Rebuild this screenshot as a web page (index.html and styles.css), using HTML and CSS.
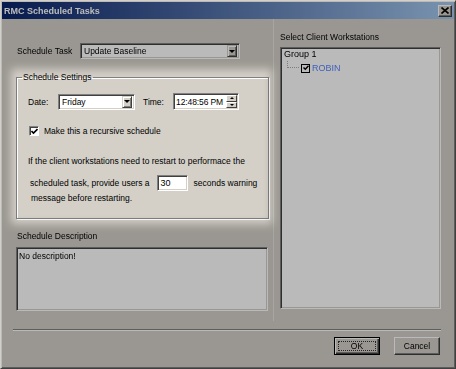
FILE: index.html
```html
<!DOCTYPE html>
<html>
<head>
<meta charset="utf-8">
<link rel="stylesheet" href="styles.css">
</head>
<body>
<div class="window">
  <div class="titlebar soft">
    <span class="title">RMC Scheduled Tasks</span>
    <span class="close"><svg width="8" height="7" viewBox="0 0 8 7"><path d="M0.5 0.5 L7.5 6.5 M7.5 0.5 L0.5 6.5" stroke="#000" stroke-width="1.6"/></svg></span>
  </div>
  <div class="main">
    <div class="left">
      <div class="task-row soft">
        <span class="task-label">Schedule Task</span>
        <div class="combo combo-task"><span class="combo-text">Update Baseline</span><span class="dd"><i class="tri"></i></span></div>
      </div>
      <fieldset class="group">
        <legend>Schedule Settings</legend>
        <div class="dt-row">
          <span class="lbl-date">Date:</span>
          <div class="combo combo-date"><span class="combo-text">Friday</span><span class="dd"><i class="tri"></i></span></div>
          <span class="lbl-time">Time:</span>
          <div class="spin">
            <span class="spin-text">12:48:56 PM</span>
            <span class="spin-btns"><span class="sb"><i class="up"></i></span><span class="sb"><i class="down"></i></span></span>
          </div>
        </div>
        <div class="check-row">
          <span class="cb"><svg width="7" height="7" viewBox="0 0 7 7"><path d="M0.5 3 L2.5 5 L6.5 1" stroke="#000" stroke-width="1.6" fill="none"/></svg></span>
          <span>Make this a recursive schedule</span>
        </div>
        <div class="msg1">If the client workstations need to restart to performace the</div>
        <div class="msg2">
          <span>scheduled task, provide users a</span>
          <span class="num">30</span>
          <span>seconds warning</span>
        </div>
        <div class="msg3">message before restarting.</div>
      </fieldset>
      <div class="desc-label soft">Schedule Description</div>
      <div class="desc soft">No description!</div>
    </div>
    <div class="right soft">
      <div class="right-label">Select Client Workstations</div>
      <div class="tree">
        <div class="node">Group 1</div>
        <div class="node child">
          <span class="branch"></span>
          <span class="tcb"><svg width="6" height="6" viewBox="0 0 6 6"><path d="M0.5 2.5 L2.3 4.3 L5.5 0.8" stroke="#000" stroke-width="1.4" fill="none"/></svg></span>
          <span class="robin">ROBIN</span>
        </div>
      </div>
    </div>
  </div>
  <div class="sep soft"></div>
  <div class="buttons soft">
    <span class="btn default"><span class="focus">OK</span></span>
    <span class="btn">Cancel</span>
  </div>
  <div class="spotlight"></div>
</div>
</body>
</html>
```

FILE: styles.css
```css
* { box-sizing: border-box; }
html, body { margin: 0; padding: 0; }
body {
  width: 456px;
  height: 369px;
  overflow: hidden;
  background: #d4d0c8;
  font-family: "Liberation Sans", Arial, sans-serif;
  font-size: 8.5px;
  color: #000;
}
.soft { filter: blur(0.45px); }

.window {
  position: relative;
  width: 456px;
  height: 369px;
  overflow: hidden;
  background: #d4d0c8;
  border: 1px solid;
  border-color: #d4d0c8 #404040 #404040 #d4d0c8;
  box-shadow: inset 1px 1px 0 #fff, inset -1px -1px 0 #808080;
  display: flex;
  flex-direction: column;
}

.titlebar {
  margin: 1px 1px 0 1px;
  height: 17px;
  background: linear-gradient(to right, #0a246a, #a6caf0);
  display: flex;
  align-items: center;
  justify-content: space-between;
  padding: 0 2px 0 2px;
}
.title {
  color: #fff;
  font-weight: bold;
  font-size: 9px;
}
.close {
  width: 14px;
  height: 12px;
  background: #d4d0c8;
  border: 1px solid;
  border-color: #fff #404040 #404040 #fff;
  box-shadow: inset -1px -1px 0 #808080;
  display: flex;
  align-items: center;
  justify-content: center;
}

.main {
  height: 302px;
  display: flex;
  flex: none;
}
.left {
  width: 254px;
  margin-left: 14px;
  padding-top: 24px;
  display: flex;
  flex-direction: column;
}

.task-row {
  display: flex;
  align-items: center;
  height: 16px;
}
.task-label {
  width: 65px;
  padding-left: 2px;
}

.combo {
  height: 16px;
  background: #fff;
  border: 1px solid;
  border-color: #808080 #fff #fff #808080;
  box-shadow: inset 1px 1px 0 #404040, inset -1px -1px 0 #d4d0c8;
  display: flex;
  align-items: center;
  padding: 2px;
}
.combo-task { width: 160px; }
.combo-date { width: 77px; }
.combo-text { flex: 1; padding-left: 1px; white-space: nowrap; }
.dd {
  width: 10px;
  height: 12px;
  background: #d4d0c8;
  border: 1px solid;
  border-color: #d4d0c8 #404040 #404040 #d4d0c8;
  box-shadow: inset 1px 1px 0 #fff, inset -1px -1px 0 #808080;
  display: flex;
  align-items: center;
  justify-content: center;
}
.tri {
  width: 0;
  height: 0;
  border-left: 3px solid transparent;
  border-right: 3px solid transparent;
  border-top: 3px solid #000;
}

.group {
  margin: 13px 0 0 1px;
  width: 253px;
  padding: 0 6px 14px 5px;
  border: 1px solid #808080;
  box-shadow: 1px 1px 0 #fff, inset 1px 1px 0 #fff;
  min-width: 0;
}
.group legend {
  padding: 0 1px;
  line-height: 11px;
}
.dt-row {
  margin: 10px 0 0 6px;
  display: flex;
  align-items: center;
  height: 17px;
}
.lbl-date { width: 30px; }
.lbl-time { width: 30px; margin-left: 8px; }
.spin {
  width: 66px;
  height: 17px;
  background: #fff;
  border: 1px solid;
  border-color: #808080 #fff #fff #808080;
  box-shadow: inset 1px 1px 0 #404040, inset -1px -1px 0 #d4d0c8;
  display: flex;
  align-items: center;
  padding: 2px 1px 2px 2px;
}
.spin-text {
  flex: 1;
  font-size: 8.5px;
  white-space: nowrap;
  overflow: hidden;
  letter-spacing: -0.1px;
}
.spin-btns {
  display: flex;
  flex-direction: column;
  width: 11px;
  height: 13px;
  flex: none;
}
.sb {
  flex: 1;
  background: #d4d0c8;
  border: 1px solid;
  border-color: #fff #404040 #404040 #fff;
  display: flex;
  align-items: center;
  justify-content: center;
}
.up, .down {
  width: 0; height: 0;
  border-left: 2px solid transparent;
  border-right: 2px solid transparent;
}
.up { border-bottom: 2px solid #000; }
.down { border-top: 2px solid #000; }

.check-row {
  margin: 15px 0 0 7px;
  display: flex;
  align-items: center;
  height: 11px;
  gap: 5px;
}
.cb {
  width: 10px;
  height: 10px;
  background: #fff;
  border: 1px solid;
  border-color: #808080 #fff #fff #808080;
  box-shadow: inset 1px 1px 0 #404040;
  display: flex;
  align-items: center;
  justify-content: center;
  padding-left: 1px;
  padding-top: 1px;
}
.msg1 {
  margin: 20px 0 0 6px;
  line-height: 11px;
}
.msg2 {
  margin: 8px 0 0 8px;
  display: flex;
  align-items: center;
  height: 16px;
}
.num {
  width: 31px;
  height: 16px;
  margin: 0 6px 0 7px;
  background: #fff;
  border: 1px solid;
  border-color: #808080 #fff #fff #808080;
  box-shadow: inset 1px 1px 0 #404040, inset -1px -1px 0 #d4d0c8;
  padding: 2px 0 0 3px;
  font-size: 9px;
  line-height: 11px;
}
.msg3 {
  margin: 2px 0 0 9px;
  line-height: 11px;
}

.desc-label {
  margin: 12px 0 0 2px;
  line-height: 11px;
}
.desc {
  margin: 5px 0 0 1px;
  width: 252px;
  height: 64px;
  background: #fff;
  border: 1px solid;
  border-color: #808080 #fff #fff #808080;
  box-shadow: inset 1px 1px 0 #404040, inset -1px -1px 0 #d4d0c8;
  padding: 3px 2px;
  line-height: 10px;
}

.right {
  margin-left: 4px;
  width: 170px;
  border-left: 1px solid #e6e3dc;
  padding: 13px 0 0 6px;
  display: flex;
  flex-direction: column;
}
.right-label { line-height: 11px; }
.tree {
  margin-top: 4px;
  width: 161px;
  height: 262px;
  background: #fff;
  border: 1px solid;
  border-color: #808080 #fff #fff #808080;
  box-shadow: inset 1px 1px 0 #404040, inset -1px -1px 0 #d4d0c8;
  padding: 1px 0 0 3px;
}
.node { line-height: 11px; font-size: 9px; }
.child {
  display: flex;
  align-items: center;
  height: 12px;
  margin-top: 2px;
}
.branch {
  width: 12px;
  height: 7px;
  margin: -7px 2px 0 3px;
  border-left: 1px dotted #aaa;
  border-bottom: 1px dotted #aaa;
}
.tcb {
  width: 9px;
  height: 9px;
  border: 1.5px solid #000;
  background: #fff;
  display: flex;
  align-items: center;
  justify-content: center;
}
.robin {
  color: #5a86ff;
  margin-left: 2px;
  font-size: 9px;
}

.sep {
  margin: 8px 0 0 12px;
  width: 428px;
  height: 2px;
  border-top: 1px solid #808080;
  border-bottom: 1px solid #fff;
}
.buttons {
  margin-top: 6px;
  display: flex;
  justify-content: flex-end;
  gap: 14px;
  padding-right: 15px;
}
.btn {
  width: 46px;
  height: 18px;
  background: #d4d0c8;
  border: 1px solid;
  border-color: #fff #404040 #404040 #fff;
  box-shadow: inset -1px -1px 0 #808080;
  display: flex;
  align-items: center;
  justify-content: center;
}
.btn.default {
  border: 1px solid #000;
  box-shadow: inset 1px 1px 0 #fff, inset -1px -1px 0 #404040, inset -2px -2px 0 #808080;
  padding: 3px;
}
.focus {
  flex: 1;
  align-self: stretch;
  border: 1px dotted #333;
  display: flex;
  align-items: center;
  justify-content: center;
}

.spotlight {
  position: absolute;
  left: 10px;
  top: 68px;
  width: 261px;
  height: 155px;
  box-shadow: 0 0 0 600px rgba(0, 0, 0, 0.27);
  filter: blur(4px);
  pointer-events: none;
}
```
